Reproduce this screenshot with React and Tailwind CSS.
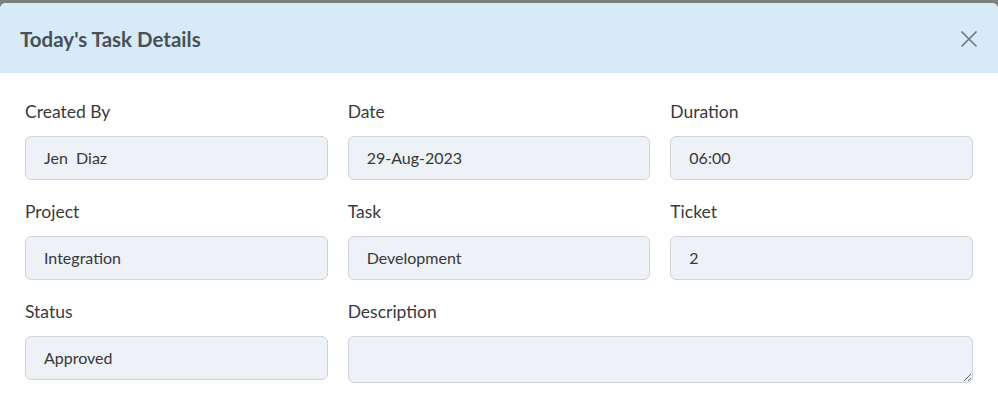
import React from "react";

const Field = ({ label, value }) => (
  <div className="flex flex-col">
    <div className="h-6 leading-6 text-[17.5px] text-[#3a3a3a] mb-3">{label}</div>
    <div className="h-[44px] rounded-md border border-[#cdd3db] bg-[#eef1f6] pl-[18px] flex items-center text-[16px] text-[#383838]">
      {value}
    </div>
  </div>
);

export default function App() {
  return (
    <div className="w-[998px] h-[408px] bg-[#7f7f7f] pt-[3px] overflow-hidden" style={{ fontFamily: "Lato, 'Open Sans', sans-serif" }}>
      <div className="h-full bg-white rounded-t-md overflow-hidden">
        <div className="h-[70px] bg-[#d7eaf8] flex items-center justify-between pl-5 pr-[20px]">
          <h2 className="text-[20.5px] font-bold text-[#495057] pt-[2px]">Today's Task Details</h2>
          <svg width="18" height="18" viewBox="0 0 18 18" className="text-[#6c757d] mt-[2px]">
            <path d="M1.5 1.5 L16.5 16.5 M16.5 1.5 L1.5 16.5" stroke="currentColor" strokeWidth="1.6" fill="none" />
          </svg>
        </div>
        <div className="px-[25px] pt-[27px] grid grid-cols-3 gap-x-5 gap-y-5">
          <Field label="Created By" value={<span>Jen&nbsp; Diaz</span>} />
          <Field label="Date" value="29-Aug-2023" />
          <Field label="Duration" value="06:00" />
          <Field label="Project" value="Integration" />
          <Field label="Task" value="Development" />
          <Field label="Ticket" value="2" />
          <Field label="Status" value="Approved" />
          <div className="col-span-2 flex flex-col">
            <div className="h-6 leading-6 text-[17.5px] text-[#3a3a3a] mb-3">Description</div>
            <textarea
              readOnly
              className="block h-[47px] w-[625px] rounded-md border border-[#cdd3db] bg-[#eef1f6] outline-none resize-y"
            />
          </div>
        </div>
      </div>
    </div>
  );
}
